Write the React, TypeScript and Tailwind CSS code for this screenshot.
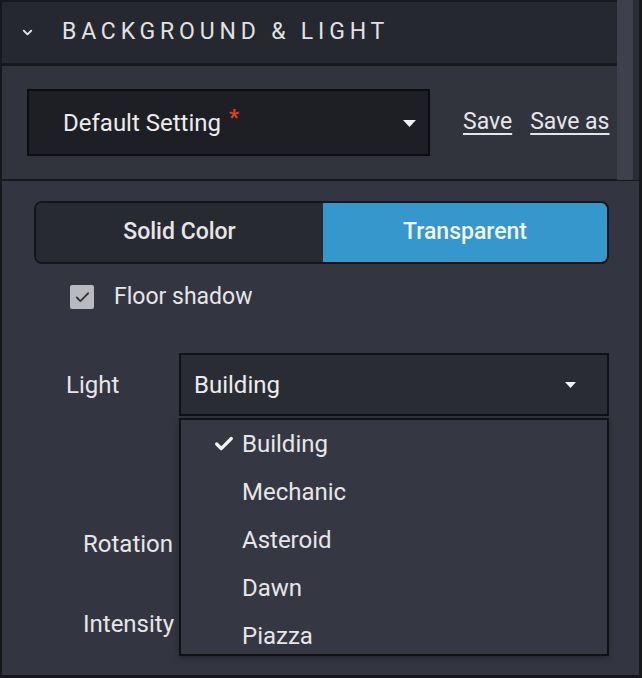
import { Check, ChevronDown } from 'lucide-react';

const lightOptions = ['Building', 'Mechanic', 'Asteroid', 'Dawn', 'Piazza'];

function Caret() {
    return (
        <svg width="13" height="7" viewBox="0 0 13 7" className="block">
            <path d="M0 0 L13 0 L6.5 7 Z" fill="#f2f2f2" />
        </svg>
    );
}

export default function App() {
    const selected = 'Building';

    return (
        <div
            className="relative w-[642px] h-[678px] bg-[#17181c] border-l-2 border-r-[3px] border-b-[3px] border-[#17181c] text-[#e6e6e8] overflow-hidden"
            style={{ fontFamily: 'Roboto, "Noto Sans", sans-serif' }}
        >
            {/* header */}
            <div className="mt-[2px] h-[61px] bg-[#26282f] flex items-center">
                <ChevronDown size={15} strokeWidth={3} className="ml-[18px] text-[#e6e6e8]" />
                <span className="ml-[27px] text-[23px] tracking-[0.21em] text-[#e2e2e4]">BACKGROUND &amp; LIGHT</span>
            </div>

            {/* preset */}
            <div className="mt-[3px] h-[113px] bg-[#31333d] flex items-center">
                <div className="ml-[25px] w-[403px] h-[67px] bg-[#1e1f24] border-2 border-[#0d0d10] flex items-center">
                    <span className="ml-[34px] text-[24px] text-[#ececee]">Default Setting</span>
                    <span className="ml-[8px] -mt-[10px] text-[22px] text-[#e0421e] font-bold leading-none">*</span>
                    <div className="ml-auto mr-[12px] mt-[2px]">
                        <Caret />
                    </div>
                </div>
                <a className="ml-[33px] text-[23px] underline underline-offset-[4px] text-[#e6e6e8]">Save</a>
                <a className="ml-[18px] text-[23px] underline underline-offset-[4px] text-[#e6e6e8]">Save as</a>
            </div>

            {/* settings */}
            <div className="mt-[2px] h-[495px] bg-[#333540] pt-[20px]">
                <div className="ml-[32px] w-[575px] h-[63px] rounded-[8px] border-2 border-[#15161a] overflow-hidden flex">
                    <button className="flex-1 bg-[#282a31] text-[23px] font-medium text-[#e6e6e8]">Solid Color</button>
                    <button className="w-[284px] bg-[#3597cc] text-[23px] font-medium text-[#f2f6f8]">Transparent</button>
                </div>

                <div className="mt-[21px] ml-[68px] h-[24px] flex items-center">
                    <div className="w-[24px] h-[24px] rounded-[2px] bg-[#b9b9c0] flex items-center justify-center">
                        <Check size={17} strokeWidth={2.5} className="text-[#34343a]" />
                    </div>
                    <span className="ml-[20px] text-[23px] text-[#e6e6e8]">Floor shadow</span>
                </div>

                <div className="mt-[44px] flex items-center">
                    <span className="ml-[64px] w-[113px] text-[24px] text-[#e6e6e8]">Light</span>
                    <div className="relative">
                        <div className="w-[430px] h-[63px] bg-[#2a2c33] border-2 border-[#111115] flex items-center">
                            <span className="ml-[13px] text-[24px] text-[#ececee]">{selected}</span>
                            <div className="ml-auto mr-[31px] mt-[1px]">
                                <svg width="11" height="6" viewBox="0 0 11 6" className="block">
                                    <path d="M0 0 L11 0 L5.5 6 Z" fill="#f2f2f2" />
                                </svg>
                            </div>
                        </div>
                        <div className="absolute z-10 left-0 top-[65px] w-[430px] h-[238px] bg-[#353742] border-2 border-[#111115] overflow-hidden shadow-[0_2px_6px_rgba(0,0,0,0.3)]">
                            {lightOptions.map((opt) => (
                                <div key={opt} className="h-[48px] flex items-center">
                                    <div className="w-[61px] flex justify-end pr-[7px]">
                                        {opt === selected && <Check size={22} strokeWidth={3.5} className="text-[#f4f4f4]" />}
                                    </div>
                                    <span className="text-[24px] text-[#e6e6e8]">{opt}</span>
                                </div>
                            ))}
                        </div>
                    </div>
                </div>

                <div className="mt-[104px] h-[48px] flex items-center">
                    <span className="ml-[81px] text-[24px] text-[#e6e6e8]">Rotation</span>
                </div>
                <div className="mt-[32px] h-[48px] flex items-center">
                    <span className="ml-[81px] text-[24px] text-[#e6e6e8]">Intensity</span>
                </div>
            </div>

            {/* scrollbar */}
            <div className="absolute top-0 right-0 w-[22px] h-[180px] bg-[#2b2d36]">
                <div className="w-[16px] h-[180px] bg-[#3e404c] rounded-b-[2px]" />
            </div>
        </div>
    );
}
